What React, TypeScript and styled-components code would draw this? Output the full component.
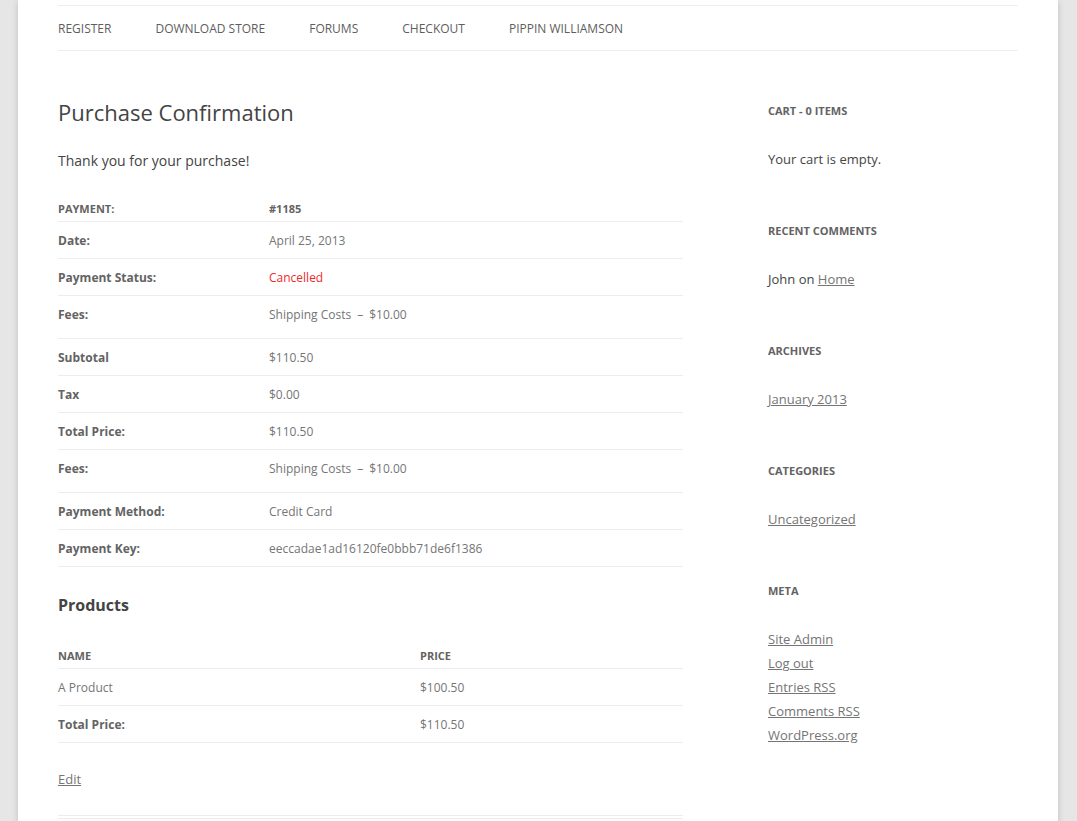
import styled, { createGlobalStyle } from "styled-components";

const GlobalStyle = createGlobalStyle`
  html, body {
    margin: 0;
    padding: 0;
    overflow: hidden;
    background: #e6e6e6;
  }
  body {
    font-family: "Open Sans", "Liberation Sans", sans-serif;
    font-size: 14px;
    line-height: 24px;
    color: #444;
  }
  * {
    box-sizing: border-box;
  }
`;

const Site = styled.div`
  width: 1040px;
  margin: 0 19px 0 18px;
  padding: 5px 40px 0;
  background: #fff;
  min-height: 821px;
  box-shadow: 0 2px 6px rgba(100, 100, 100, 0.3);
`;

const Nav = styled.nav`
  display: flex;
  gap: 44px;
  border-top: 1px solid #ededed;
  border-bottom: 1px solid #ededed;
  height: 46px;
  padding-top: 2px;
  align-items: center;
`;

const NavLink = styled.a`
  font-size: 12px;
  line-height: 42px;
  text-transform: uppercase;
  color: #5e5e5e;
  text-decoration: none;
`;

const Main = styled.div`
  display: flex;
  justify-content: space-between;
  margin-top: 48px;
`;

const Content = styled.article`
  width: 625px;
  padding-bottom: 24px;
  border-bottom: 4px double #ededed;
`;

const Title = styled.h1`
  margin: 0 0 24px;
  font-size: 22px;
  line-height: 26px;
  font-weight: normal;
  color: #444;
`;

const Intro = styled.p`
  margin: 0 0 24px;
  font-size: 14px;
  line-height: 24px;
`;

const Table = styled.table`
  width: 100%;
  border-collapse: collapse;
  border-bottom: 1px solid #ededed;
  margin-bottom: 24px;
  font-size: 12px;
  line-height: 24px;
`;

const Th = styled.th<{ $width?: string }>`
  text-align: left;
  font-size: 11px;
  line-height: 24px;
  font-weight: bold;
  text-transform: uppercase;
  color: #636363;
  padding: 0;
  width: ${({ $width }) => $width || "auto"};
`;

const Td = styled.td<{ $label?: boolean; $status?: boolean }>`
  border-top: 1px solid #ededed;
  padding: 7px 10px 5px 0;
  vertical-align: top;
  font-weight: ${({ $label }) => ($label ? "bold" : "normal")};
  color: ${({ $label, $status }) =>
    $status ? "#ee2b2b" : $label ? "#636363" : "#757575"};
`;

const FeeList = styled.ul`
  list-style: none;
  margin: 0 0 6px;
  padding: 0;
`;

const FeeSep = styled.span`
  padding: 0 6px;
`;

const SectionTitle = styled.h3`
  margin: 0 0 25px;
  font-size: 16px;
  line-height: 28px;
  font-weight: bold;
  color: #444;
`;

const EditLink = styled.a`
  display: block;
  font-size: 13px;
  line-height: 24px;
  color: #757575;
  text-decoration: underline;
`;

const Sidebar = styled.aside`
  width: 250px;
`;

const Widget = styled.section`
  margin-bottom: 48px;
`;

const WidgetTitle = styled.h3`
  margin: 0 0 24px;
  font-size: 11px;
  line-height: 24px;
  font-weight: bold;
  text-transform: uppercase;
  color: #636363;
`;

const WidgetText = styled.p`
  margin: 0;
  font-size: 13px;
  line-height: 24px;
  color: #444;
`;

const WidgetList = styled.ul`
  list-style: none;
  margin: 0;
  padding: 0;
  font-size: 13px;
  line-height: 24px;
`;

const WidgetLink = styled.a`
  color: #757575;
  text-decoration: underline;
`;

const navItems = [
  "Register",
  "Download Store",
  "Forums",
  "Checkout",
  "Pippin Williamson",
];

const metaLinks = [
  "Site Admin",
  "Log out",
  "Entries RSS",
  "Comments RSS",
  "WordPress.org",
];

const Fees = () => (
  <FeeList>
    <li>
      <span>Shipping Costs</span>
      <FeeSep>–</FeeSep>
      <span>$10.00</span>
    </li>
  </FeeList>
);

const App = () => {
  return (
    <>
      <GlobalStyle />
      <Site>
        <Nav>
          {navItems.map((item) => (
            <NavLink key={item} href="#">
              {item}
            </NavLink>
          ))}
        </Nav>

        <Main>
          <Content>
            <Title>Purchase Confirmation</Title>
            <Intro>Thank you for your purchase!</Intro>

            <Table>
              <thead>
                <tr>
                  <Th $width="211px">Payment:</Th>
                  <Th>#1185</Th>
                </tr>
              </thead>
              <tbody>
                <tr>
                  <Td $label>Date:</Td>
                  <Td>April 25, 2013</Td>
                </tr>
                <tr>
                  <Td $label>Payment Status:</Td>
                  <Td $status>Cancelled</Td>
                </tr>
                <tr>
                  <Td $label>Fees:</Td>
                  <Td>
                    <Fees />
                  </Td>
                </tr>
                <tr>
                  <Td $label>Subtotal</Td>
                  <Td>$110.50</Td>
                </tr>
                <tr>
                  <Td $label>Tax</Td>
                  <Td>$0.00</Td>
                </tr>
                <tr>
                  <Td $label>Total Price:</Td>
                  <Td>$110.50</Td>
                </tr>
                <tr>
                  <Td $label>Fees:</Td>
                  <Td>
                    <Fees />
                  </Td>
                </tr>
                <tr>
                  <Td $label>Payment Method:</Td>
                  <Td>Credit Card</Td>
                </tr>
                <tr>
                  <Td $label>Payment Key:</Td>
                  <Td>eeccadae1ad16120fe0bbb71de6f1386</Td>
                </tr>
              </tbody>
            </Table>

            <SectionTitle>Products</SectionTitle>
            <Table>
              <thead>
                <tr>
                  <Th $width="362px">Name</Th>
                  <Th>Price</Th>
                </tr>
              </thead>
              <tbody>
                <tr>
                  <Td>A Product</Td>
                  <Td>$100.50</Td>
                </tr>
                <tr>
                  <Td $label>Total Price:</Td>
                  <Td>$110.50</Td>
                </tr>
              </tbody>
            </Table>

            <EditLink href="#">Edit</EditLink>
          </Content>

          <Sidebar>
            <Widget>
              <WidgetTitle>Cart - 0 Items</WidgetTitle>
              <WidgetText>Your cart is empty.</WidgetText>
            </Widget>
            <Widget>
              <WidgetTitle>Recent Comments</WidgetTitle>
              <WidgetList>
                <li>
                  John on <WidgetLink href="#">Home</WidgetLink>
                </li>
              </WidgetList>
            </Widget>
            <Widget>
              <WidgetTitle>Archives</WidgetTitle>
              <WidgetList>
                <li>
                  <WidgetLink href="#">January 2013</WidgetLink>
                </li>
              </WidgetList>
            </Widget>
            <Widget>
              <WidgetTitle>Categories</WidgetTitle>
              <WidgetList>
                <li>
                  <WidgetLink href="#">Uncategorized</WidgetLink>
                </li>
              </WidgetList>
            </Widget>
            <Widget>
              <WidgetTitle>Meta</WidgetTitle>
              <WidgetList>
                {metaLinks.map((link) => (
                  <li key={link}>
                    <WidgetLink href="#">{link}</WidgetLink>
                  </li>
                ))}
              </WidgetList>
            </Widget>
          </Sidebar>
        </Main>
      </Site>
    </>
  );
};

export default App;
